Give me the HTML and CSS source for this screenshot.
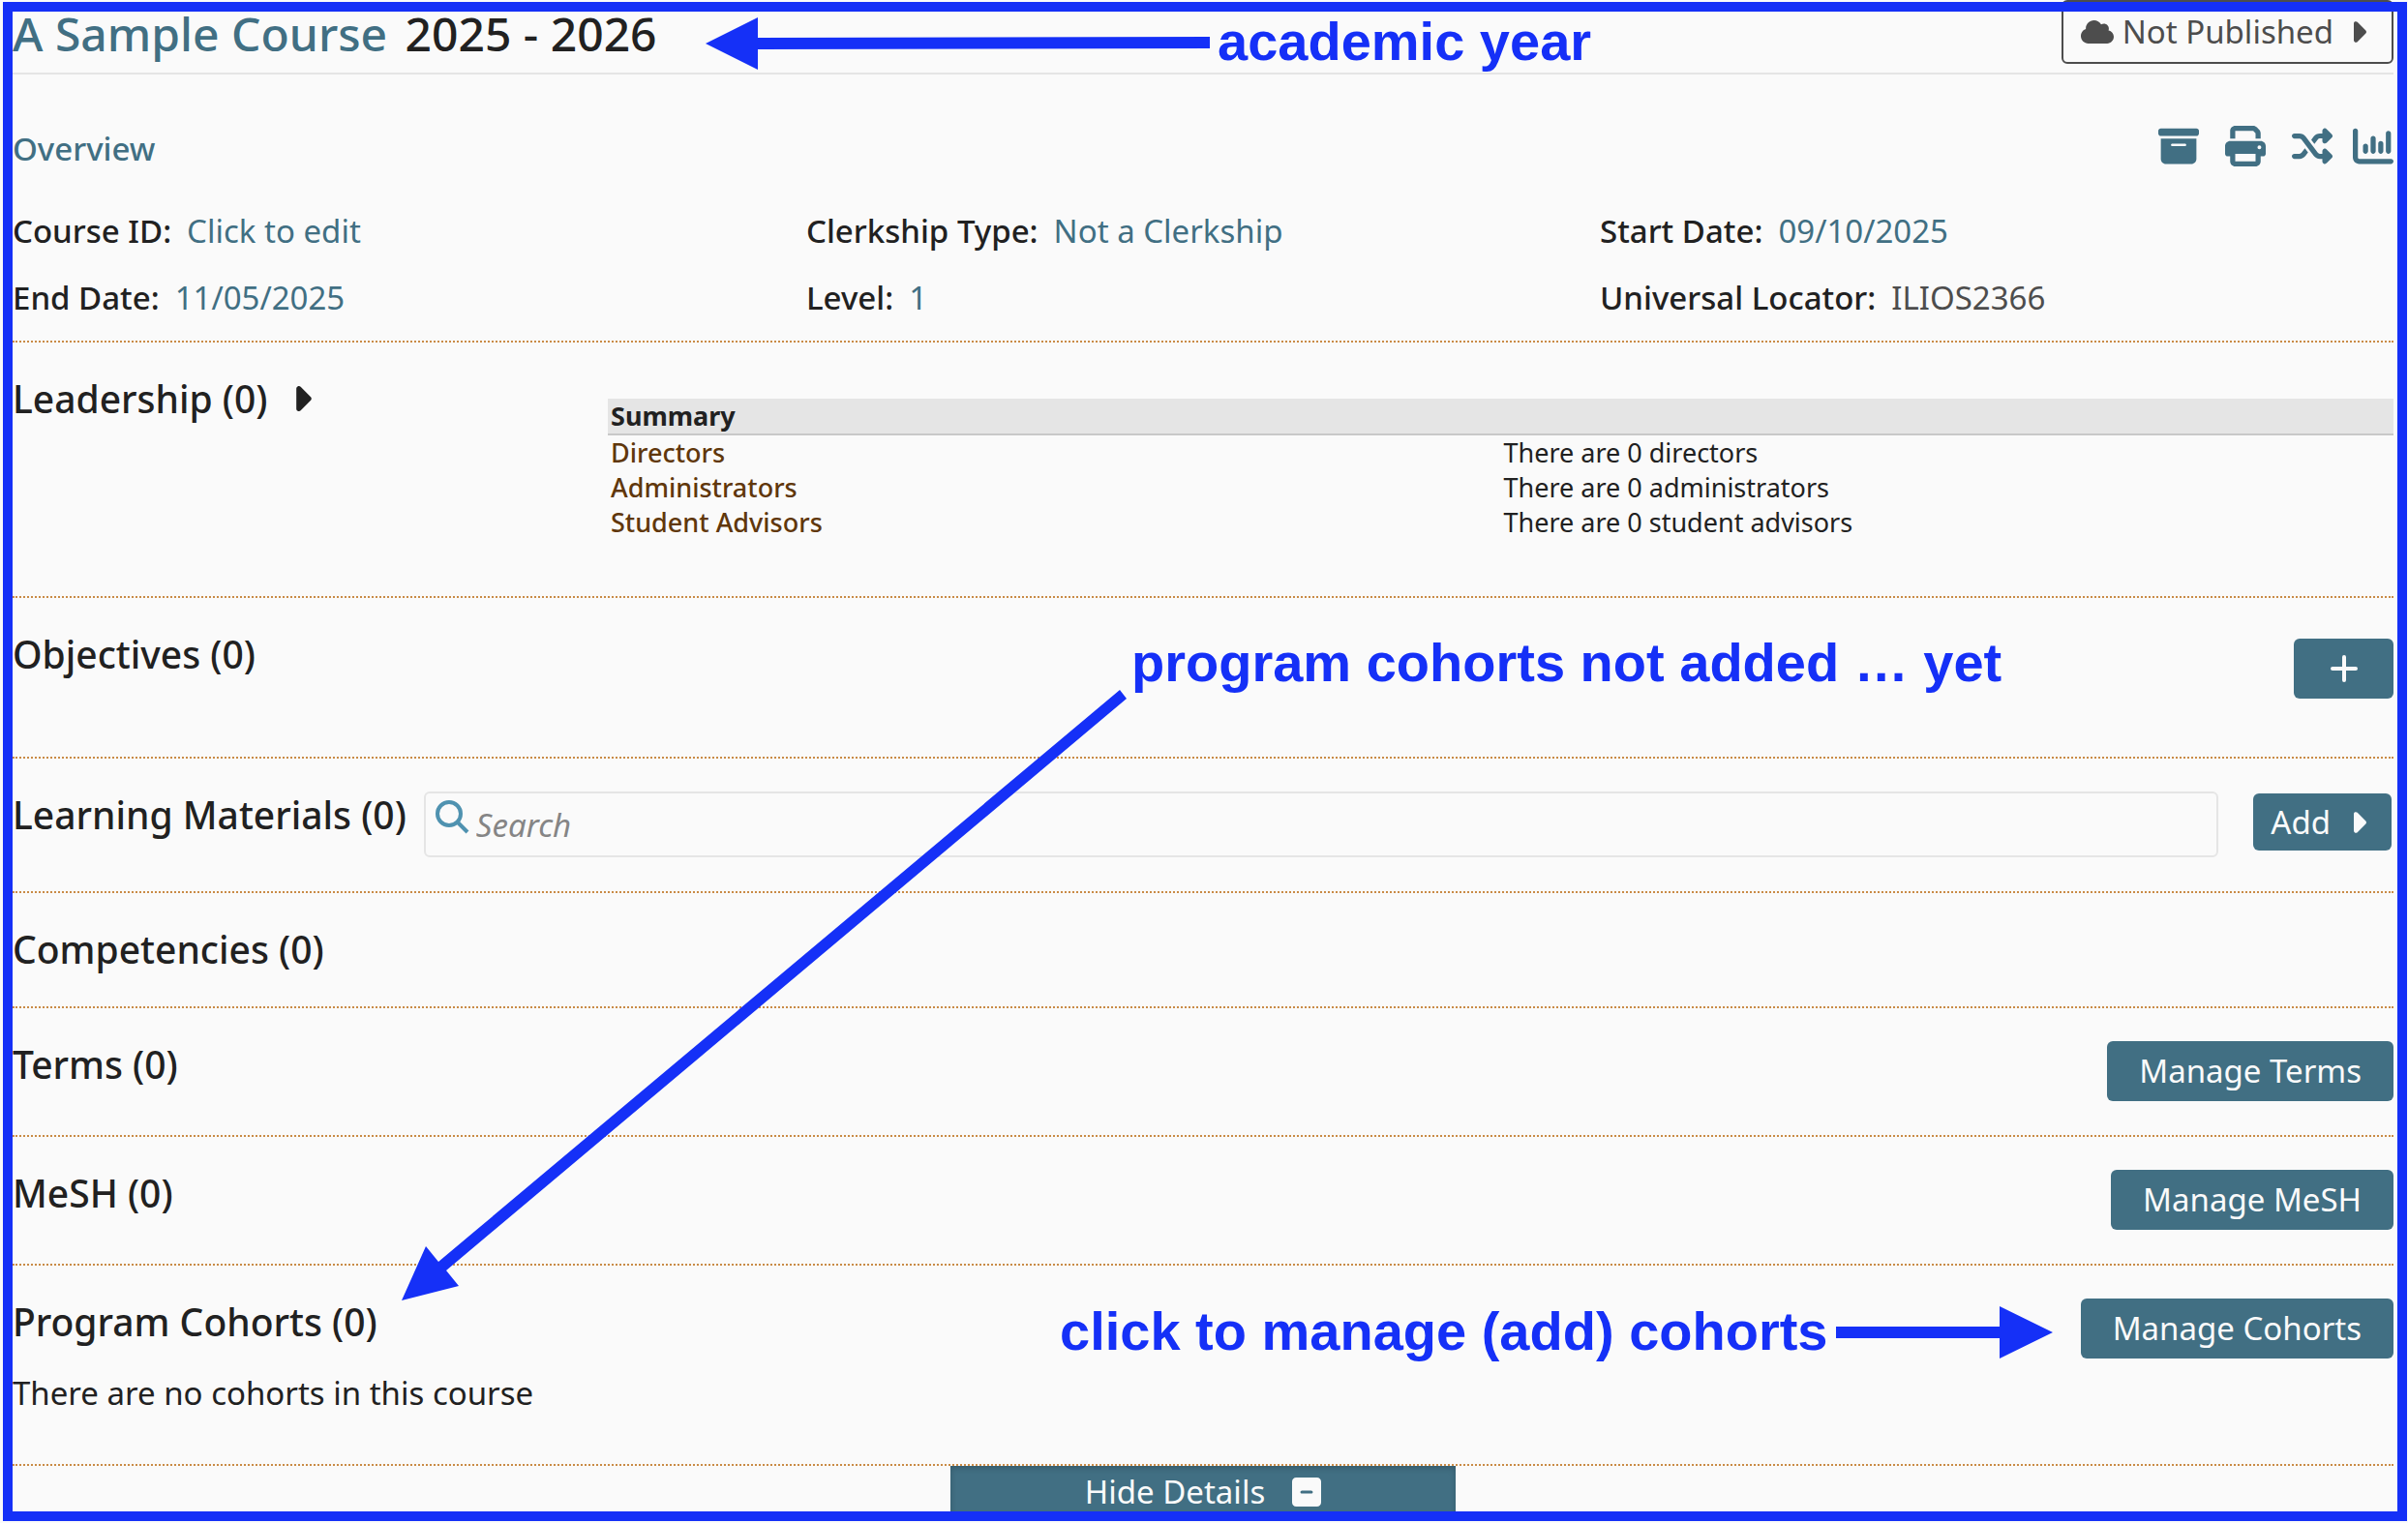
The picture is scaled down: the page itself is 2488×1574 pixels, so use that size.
FILE: index.html
```html
<!DOCTYPE html>
<html lang="en">
<head>
<meta charset="utf-8">
<title>A Sample Course</title>
<link rel="stylesheet" href="styles.css">
</head>
<body>
<svg class="sprite" aria-hidden="true">
  <symbol id="caret" viewBox="64 96 192 320"><path d="M246.600 278.600c12.500-12.500 12.500-32.800 0-45.300l-128-128c-9.200-9.200-22.900-11.900-34.900-6.900s-19.800 16.600-19.800 29.600l0 256c0 12.900 7.800 24.600 19.800 29.600s25.700 2.200 34.900-6.900l128-128z"/></symbol>
</svg>
<div class="page">
  <header class="course-header">
    <h1 class="title"><a href="#title">A Sample Course</a> <span>2025 - 2026</span></h1>
    <button class="publish" type="button">
      <svg class="cloud" viewBox="0 32 640 448" aria-hidden="true"><path d="M0 336c0 79.500 64.500 144 144 144l368 0c70.700 0 128-57.300 128-128c0-61.900-44-113.600-102.400-125.400c4.100-10.700 6.400-22.400 6.400-34.600c0-53-43-96-96-96c-19.700 0-38.100 6-53.300 16.200C367 64.200 315.300 32 256 32C167.600 32 96 103.600 96 192c0 2.700 .1 5.400 .2 8.100C40.200 219.800 0 273.200 0 336z"/></svg>
      <span>Not Published</span>
      <svg class="caret" aria-hidden="true"><use href="#caret"/></svg>
    </button>
  </header>

  <main>
    <section class="overview">
      <div class="overview-bar">
        <h2 class="overview-title">Overview</h2>
        <nav class="tools" aria-label="Course tools">
          <div class="tool-group">
            <a href="#materials" aria-label="Materials"><svg viewBox="0 0 512 512"><path d="M32 32l448 0c17.700 0 32 14.300 32 32l0 32c0 17.700-14.300 32-32 32L32 128C14.300 128 0 113.700 0 96L0 64C0 46.300 14.300 32 32 32zm0 128l448 0 0 256c0 35.300-28.700 64-64 64L96 480c-35.300 0-64-28.700-64-64l0-256zm128 80c0 8.800 7.200 16 16 16l160 0c8.800 0 16-7.200 16-16s-7.200-16-16-16l-160 0c-8.800 0-16 7.200-16 16z"/></svg></a>
            <a href="#print" aria-label="Print"><svg viewBox="0 0 512 512"><path d="M128 0C92.700 0 64 28.700 64 64l0 96 64 0 0-96 226.700 0L384 93.300l0 66.700 64 0 0-66.700c0-17-6.700-33.300-18.700-45.300L400 18.700C388 6.700 371.700 0 354.700 0L128 0zM384 352l0 32 0 64-256 0 0-64 0-16 0-16 256 0zm64 32l32 0c17.700 0 32-14.300 32-32l0-96c0-35.300-28.700-64-64-64L64 192c-35.300 0-64 28.700-64 64l0 96c0 17.700 14.300 32 32 32l32 0 0 64c0 35.300 28.700 64 64 64l256 0c35.300 0 64-28.700 64-64l0-64zM432 248a24 24 0 1 1 0 48 24 24 0 1 1 0-48z"/></svg></a>
            <a href="#rollover" aria-label="Rollover"><svg viewBox="0 0 512 512"><path d="M403.800 34.400c12-5 25.700-2.200 34.900 6.900l64 64c6 6 9.400 14.100 9.400 22.600s-3.400 16.600-9.400 22.600l-64 64c-9.200 9.200-22.900 11.900-34.900 6.900s-19.800-16.600-19.800-29.600l0-32-32 0c-10.100 0-19.600 4.700-25.600 12.800L284 229.300 244 176l31.200-41.600C293.300 110.200 321.800 96 352 96l32 0 0-32c0-12.900 7.800-24.600 19.800-29.600zM164 282.700L204 336l-31.200 41.600C154.700 401.800 126.200 416 96 416l-64 0c-17.700 0-32-14.300-32-32s14.300-32 32-32l64 0c10.100 0 19.600-4.700 25.600-12.800L164 282.700zm274.600 188c-9.200 9.200-22.900 11.900-34.900 6.900s-19.800-16.600-19.800-29.600l0-32-32 0c-30.200 0-58.700-14.200-76.800-38.400L121.600 172.800c-6-8.100-15.500-12.800-25.600-12.800l-64 0c-17.700 0-32-14.300-32-32s14.300-32 32-32l64 0c30.200 0 58.700 14.200 76.800 38.400L326.400 339.200c6 8.100 15.500 12.800 25.600 12.800l32 0 0-32c0-12.900 7.800-24.600 19.800-29.600s25.700-2.200 34.900 6.900l64 64c6 6 9.400 14.100 9.400 22.600s-3.400 16.600-9.400 22.600l-64 64z"/></svg></a>
          </div>
          <a href="#report" aria-label="Visualizations"><svg viewBox="0 0 512 512"><path d="M32 32c17.700 0 32 14.300 32 32l0 336c0 8.800 7.200 16 16 16l400 0c17.700 0 32 14.300 32 32s-14.300 32-32 32L80 480c-44.200 0-80-35.800-80-80L0 64C0 46.300 14.300 32 32 32zM160 224c17.700 0 32 14.300 32 32l0 64c0 17.700-14.300 32-32 32s-32-14.300-32-32l0-64c0-17.700 14.300-32 32-32zm128-64l0 160c0 17.700-14.300 32-32 32s-32-14.300-32-32l0-160c0-17.700 14.300-32 32-32s32 14.300 32 32zm64 32c17.700 0 32 14.300 32 32l0 96c0 17.700-14.300 32-32 32s-32-14.300-32-32l0-96c0-17.700 14.300-32 32-32zM480 96l0 224c0 17.700-14.300 32-32 32s-32-14.300-32-32l0-224c0-17.700 14.300-32 32-32s32 14.300 32 32z"/></svg></a>
        </nav>
      </div>
      <dl class="facts">
        <div><dt>Course ID:</dt><dd><a href="#id">Click to edit</a></dd></div>
        <div><dt>Clerkship Type:</dt><dd><a href="#clerkship">Not a Clerkship</a></dd></div>
        <div><dt>Start Date:</dt><dd><a href="#start">09/10/2025</a></dd></div>
        <div><dt>End Date:</dt><dd><a href="#end">11/05/2025</a></dd></div>
        <div><dt>Level:</dt><dd><a href="#level">1</a></dd></div>
        <div><dt>Universal Locator:</dt><dd class="locator">ILIOS2366</dd></div>
      </dl>
    </section>

    <section class="section leadership">
      <h2 class="heading"><button class="expand" type="button">Leadership (0) <svg class="caret" aria-hidden="true"><use href="#caret"/></svg></button></h2>
      <table class="summary">
        <thead><tr><th colspan="2" scope="col">Summary</th></tr></thead>
        <tbody>
          <tr><th scope="row">Directors</th><td>There are 0 directors</td></tr>
          <tr><th scope="row">Administrators</th><td>There are 0 administrators</td></tr>
          <tr><th scope="row">Student Advisors</th><td>There are 0 student advisors</td></tr>
        </tbody>
      </table>
    </section>

    <section class="section objectives">
      <h2 class="heading">Objectives (0)</h2>
      <button class="btn btn-plus" type="button" aria-label="Add objective"><svg viewBox="0 0 28 28" aria-hidden="true"><path d="M14 2v24M2 14h24"/></svg></button>
    </section>

    <section class="section materials">
      <h2 class="heading">Learning Materials (0)</h2>
      <label class="search">
        <svg viewBox="0 0 36 36" aria-hidden="true"><circle cx="15" cy="15" r="12"/><path d="M24 24l10 10"/></svg>
        <input type="search" placeholder="Search" aria-label="Search">
      </label>
      <button class="btn btn-add" type="button">Add <svg class="caret" aria-hidden="true"><use href="#caret"/></svg></button>
    </section>

    <section class="section">
      <h2 class="heading">Competencies (0)</h2>
    </section>

    <section class="section">
      <h2 class="heading">Terms (0)</h2>
      <button class="btn" type="button">Manage Terms</button>
    </section>

    <section class="section">
      <h2 class="heading">MeSH (0)</h2>
      <button class="btn" type="button">Manage MeSH</button>
    </section>

    <section class="section cohorts">
      <h2 class="heading">Program Cohorts (0)</h2>
      <button class="btn" type="button">Manage Cohorts</button>
      <p>There are no cohorts in this course</p>
    </section>
  </main>

  <footer class="details">
    <button class="hide-details" type="button">Hide Details
      <svg viewBox="0 32 448 448" aria-hidden="true"><path d="M64 32C28.700 32 0 60.700 0 96L0 416c0 35.300 28.700 64 64 64l320 0c35.300 0 64-28.700 64-64l0-320c0-35.300-28.700-64-64-64L64 32zm88 200l144 0c13.300 0 24 10.700 24 24s-10.700 24-24 24l-144 0c-13.300 0-24-10.700-24-24s10.700-24 24-24z"/></svg>
    </button>
  </footer>

  <div class="notes">
    <svg class="arrows" viewBox="0 0 2488 1574" aria-hidden="true">
      <path d="M729 45L783 18V39L1250 38V50L783 51V72z"/>
      <path d="M415 1344L440 1288L453 1304L1157 713L1164 722L461 1313L474 1329z"/>
      <path d="M2121 1377L2066 1404V1383H1897V1371H2066V1350z"/>
    </svg>
    <p class="note note-year">academic year</p>
    <p class="note note-empty">program cohorts not added … yet</p>
    <p class="note note-manage">click to manage (add) cohorts</p>
  </div>
</div>
</body>
</html>
```
FILE: styles.css
```css
:root {
  --teal: #416f83;
  --ink: #212121;
  --grey: #4d4d4d;
  --line: #e5e5e5;
  --orange: #c98b46;
  --brown: #60370b;
  --blue: #1530f7;
  --paper: #fafafa;
}

* {
  box-sizing: border-box;
}

body {
  margin: 0;
  background: var(--paper);
  color: var(--ink);
  font: 400 33px/48px "Noto Sans", "Open Sans", sans-serif;
}

h1, h2, p, dl, dd {
  margin: 0;
}

a {
  color: var(--teal);
  text-decoration: none;
}

button, input {
  font: inherit;
  color: inherit;
}

button {
  cursor: pointer;
}

svg {
  display: block;
  fill: currentColor;
}

.sprite {
  display: none;
}

.page {
  position: relative;
  padding: 0 15px 0 13px;
}

.caret {
  flex: none;
  width: 13px;
  height: 22px;
}

/* Course header */
.course-header {
  display: flex;
  justify-content: space-between;
  align-items: flex-start;
  padding-bottom: 9px;
  border-bottom: 2px solid var(--line);
}

.title {
  padding-top: 5px;
  font-size: 48px;
  font-weight: 500;
  line-height: 60px;
}

.title span {
  margin-left: 6px;
}

.publish {
  display: flex;
  align-items: center;
  gap: 9px;
  height: 66px;
  padding: 0 26px 0 18px;
  border: 2px solid var(--grey);
  border-radius: 6px;
  background: none;
  color: var(--grey);
}

.publish .caret {
  margin-left: 12px;
}

.cloud {
  width: 34px;
  height: 24px;
}

/* Overview */
.overview {
  padding: 53px 0 20px;
}

.overview-bar {
  display: flex;
  justify-content: space-between;
  margin-bottom: 37px;
}

.overview-title {
  color: var(--teal);
  font-size: 33px;
  font-weight: 500;
}

.tools, .tool-group {
  display: flex;
  gap: 27px;
}

.tools {
  gap: 21px;
}

.tools svg {
  width: 42px;
  height: 42px;
}

.facts {
  display: grid;
  grid-template-columns: repeat(3, 1fr);
  row-gap: 21px;
}

.facts div {
  display: flex;
  gap: 16px;
}

.facts dt {
  font-weight: 500;
}

.locator {
  color: var(--grey);
}

/* Sections */
.section {
  display: flex;
  justify-content: space-between;
  align-items: flex-start;
  padding: 34px 0 35px;
  border-top: 2px dotted var(--orange);
}

.heading {
  font-size: 39px;
  font-weight: 500;
  line-height: 48px;
}

.btn {
  display: flex;
  align-items: center;
  justify-content: center;
  height: 62px;
  padding: 0 33px;
  border: 0;
  border-radius: 6px;
  background: var(--teal);
  color: var(--paper);
}

.leadership {
  padding-bottom: 58px;
}

.expand {
  display: flex;
  align-items: center;
  gap: 30px;
  padding: 0;
  border: 0;
  background: none;
}

.expand .caret {
  width: 16px;
  height: 26px;
}

.summary {
  width: 75%;
  margin-top: 24px;
  border-collapse: collapse;
  table-layout: fixed;
  font-size: 27px;
  line-height: 36px;
}

.summary th, .summary td {
  padding: 0 3px;
  text-align: left;
}

.summary thead th {
  border-bottom: 2px solid #c8c8c8;
  background: var(--line);
  font-weight: 700;
}

.summary tbody th {
  color: var(--brown);
  font-weight: 500;
}

.objectives {
  padding: 34px 0 60px;
}

.btn-plus {
  width: 103px;
  margin-top: 8px;
}

.btn-plus svg {
  width: 28px;
  height: 28px;
  stroke: currentColor;
  stroke-width: 4;
  stroke-linecap: round;
}

.search {
  position: relative;
  flex: 1;
  margin: 0 36px 0 18px;
}

.search svg {
  position: absolute;
  top: 8px;
  left: 11px;
  width: 36px;
  height: 36px;
  fill: none;
  stroke: #4f92b0;
  stroke-width: 4;
}

.search input {
  display: block;
  width: 100%;
  height: 68px;
  padding: 0 16px 0 52px;
  border: 2px solid var(--line);
  border-radius: 6px;
  background: none;
}

.search input::placeholder {
  color: #858585;
  font-style: italic;
  opacity: 1;
}

.btn-add {
  gap: 24px;
  height: 59px;
  margin: 2px 2px 0 0;
  padding: 0 26px 0 18px;
}

.cohorts {
  flex-wrap: wrap;
  row-gap: 12px;
  padding-bottom: 49px;
}

.cohorts p {
  width: 100%;
}

/* Details toggle */
.details {
  display: flex;
  justify-content: center;
  padding-bottom: 4px;
  border-top: 2px dotted var(--orange);
}

.hide-details {
  display: flex;
  align-items: center;
  justify-content: center;
  gap: 28px;
  width: 522px;
  height: 54px;
  padding: 0;
  border: 0;
  background: var(--teal);
  box-shadow: inset 0 2px 6px rgba(0, 0, 0, .2);
  color: var(--paper);
}

.hide-details svg {
  width: 30px;
  height: 30px;
}

/* Callouts drawn over the page */
.notes {
  position: absolute;
  inset: 2px 1px 1px 3px;
  border: 10px solid var(--blue);
  color: var(--blue);
  pointer-events: none;
}

.arrows {
  position: absolute;
  top: -12px;
  left: -13px;
  width: 2488px;
  height: 1574px;
}

.note {
  position: absolute;
  font: 700 56px/64px "Liberation Sans", Arial, sans-serif;
  white-space: nowrap;
}

.note-year {
  top: -1px;
  left: 1245px;
}

.note-empty {
  top: 641px;
  left: 1156px;
}

.note-manage {
  top: 1332px;
  left: 1082px;
}
```
